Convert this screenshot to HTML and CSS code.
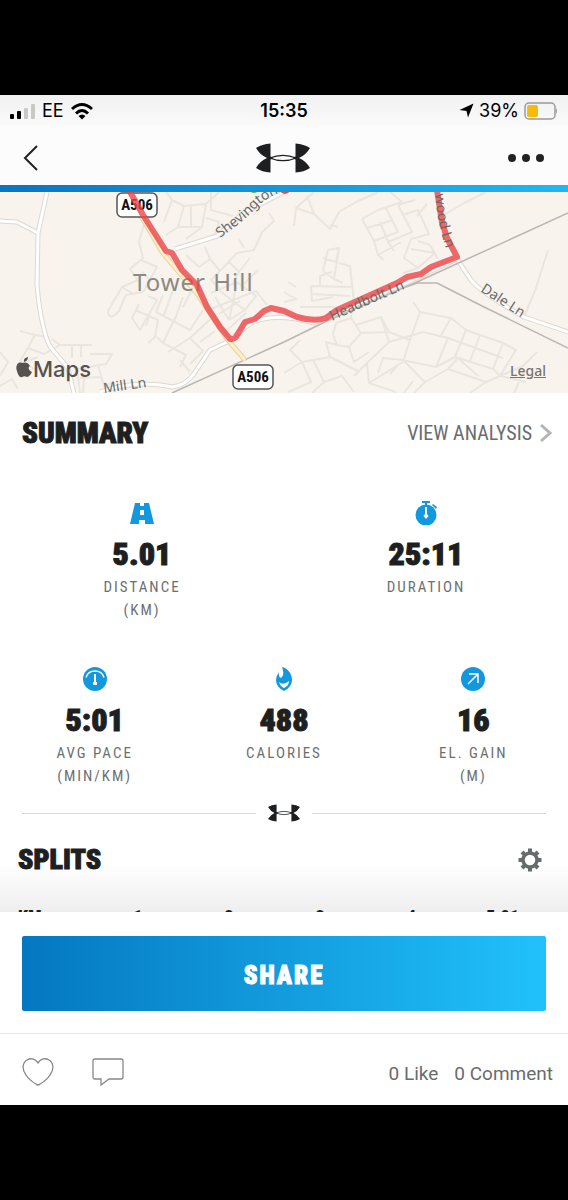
FILE: index.html
```
<!DOCTYPE html>
<html lang="en">
	<head>
		<meta charset="utf-8">
		<meta name="viewport" content="width=device-width, initial-scale=1">
		<title>Workout</title>
		<link rel="stylesheet" href="styles.css">
	</head>
	<body>
		<svg class="defs" width="0" height="0">
			<symbol id="logo" viewBox="0 0 54 30">
				<path d="M0 5Q6 1 14.500 .5V13.500L17 14.500V15.500L14.500 16.500V29.500Q6 29 0 25Q4 18 11 15Q4 12 0 5Z"/>
				<path d="M54 5Q48 1 39.500 .5V13.500L37 14.500V15.500L39.500 16.500V29.500Q48 29 54 25Q50 18 43 15Q50 12 54 5Z"/>
				<path d="M14 15Q20 12.300 27 12.300T40 15Q34 17.700 27 17.700T14 15Z" fill="none" stroke="currentColor" stroke-width="1.300"/>
			</symbol>
		</svg>
		<main class="app">
			<div class="status">
				<div class="carrier">
					<svg width="26" height="18" viewBox="0 0 26 18">
						<rect x="0" y="12" width="4" height="5" rx="1"/>
						<rect x="7" y="9" width="4" height="8" rx="1"/>
						<rect x="14" y="6" width="4" height="11" rx="1" fill="#c8c8c8"/>
						<rect x="21" y="2" width="4" height="15" rx="1" fill="#c8c8c8"/>
					</svg>
					<span>EE</span>
					<svg width="24" height="18" viewBox="0 0 24 18" fill="none" stroke="#000" stroke-width="3">
						<path d="M2 7Q12-2 22 7M6 11.500Q12 5.500 18 11.500"/>
						<path d="M8.500 14Q12 11 15.500 14L12 17.500Z" fill="#000" stroke="none"/>
					</svg>
				</div>
				<div class="time">15:35</div>
				<div class="battery">
					<svg width="15" height="15" viewBox="0 0 15 15"><path d="M14.500.5L9 14.500L7.500 8L.5 7Z"/></svg>
					<span>39%</span>
					<svg width="34" height="18" viewBox="0 0 34 18">
						<rect x="1" y="1" width="30" height="16" rx="4" fill="none" stroke="#999" stroke-width="1.500"/>
						<rect x="3" y="3" width="11" height="12" rx="2" fill="#f5bc0b"/>
						<path d="M32 6Q34 9 32 12Z" fill="#999"/>
					</svg>
				</div>
			</div>
			<header class="nav">
				<button class="icon" aria-label="Back">
					<svg width="18" height="28" viewBox="0 0 18 28" fill="none" stroke="#222" stroke-width="2"><path d="M15 2L3 14L15 26"/></svg>
				</button>
				<svg class="logo" width="54" height="30"><use href="#logo"/></svg>
				<button class="icon more" aria-label="More">
					<svg width="36" height="8" viewBox="0 0 36 8" fill="#222"><circle cx="4" cy="4" r="4"/><circle cx="18" cy="4" r="4"/><circle cx="32" cy="4" r="4"/></svg>
				</button>
			</header>
			<section class="map">
				<svg viewBox="0 0 568 201" preserveAspectRatio="xMidYMid slice">
					<defs>
						<path id="shev" d="M220 46Q243 30 256 16T300-6"/>
						<path id="wood" d="M434-24Q435 12 439 31Q442 45 449 66"/>
					</defs>
					<!-- side streets -->
					<g class="streets">
						<path d="M146 25L139 50L143 66L130 77L138 88L122 95L108 119Q109 130 119 119L126 103L143 100L157 75L141 68M122 95L132 101M143 100L151 89L142 80"/>
						<path d="M139 112L132 126L140 138L157 108L148 104M135 118L149 124L146 134M149 124L158 128L155 145L148 151M163 103L156 120L190 138L203 118M173 98L164 123M183 105L174 130M193 96L183 115"/>
						<path d="M157 145L163 151L175 126M163 151L186 163L180 175M168 160L190 146L203 159L190 172M190 146L216 122M200 150L215 139M180 168L190 180"/>
						<path d="M164 30L172 8L184 14L178 35L166 43M184 14L206 12L202 35L186 47M172 8L166 0M206 12L219 0M206 26L219 30L215 42M191 13L191 34M178 35L202 35M211 0L211 18L233 24"/>
						<path d="M186 63L199 75L210 67L220 79L237 61L254 58L262 40L274 29L269 21M210 67L205 55M220 79L211 88L220 97M229 70L239 80L250 66M239 80L233 92M244 56L239 47"/>
						<path d="M211 101L237 90L256 104L245 118L229 128L215 105M237 90L229 128M220 99L246 119M211 117L256 99L267 113M244 92L258 78M219 122L240 109M226 139L246 121"/>
						<path d="M20 139L35 143L28 156L44 162L60 153L92 153M35 143L49 145M60 153L52 147M72 153L72 166M81 153L81 165M0 160L8 170L0 184M28 156L20 169L36 178M28 169L38 165M80 201L77 177L106 172L112 162L90 162M85 175L83 201M98 173L104 194L112 191M80 186L102 185M0 194L12 187L18 197"/>
						<path d="M294 34L296 16L314 0M296 16L314 22L330 37L339 20L356 10L378 0M314 22L307 4M330 33L338 35M362 27L378 18L402 10L390 0M362 27L374 49L398 40L386 16M367 36L393 28M380 30L388 50L412 40L398 13M374 49L378 63L401 50M388 50L394 59M378 63L384 68M398 13L415 8M402 23L418 18L429 42L411 47L404 66L418 76L435 61L411 57M418 76L403 81M418 49L430 53M427 12L417 24M430 53L438 67"/>
						<path d="M323 79L328 58L339 56L336 70L323 66M339 56L334 87L323 79M334 87L343 91M339 71L350 74L354 111M311 94L352 95M311 94L312 109L333 105M320 94L320 84L332 80M300 115L334 115M313 102L350 104M284 100L296 107L284 110M288 90L296 95"/>
						<path d="M333 143L336 131L351 126L361 141L349 155L337 153L333 143M351 126L353 110M356 133L381 125L389 140L410 148L403 170L369 191L367 171L389 150L423 140L448 146L436 175L402 168M361 141L389 140M369 191L396 200M367 171L354 184M389 150L381 125M410 148L420 120L413 110M420 120L451 126L440 145M451 126L466 138L503 151L493 177L455 165L436 175M466 138L455 165M480 143L470 169M503 151L516 158L500 184L493 177M448 146L503 166"/>
						<path d="M284 181L302 170L330 165L358 179M302 170L290 158L300 148M330 165L326 150L337 153M313 168L324 190L342 184L354 200M324 190L312 201M302 170L311 190L288 200M349 155L354 170L369 160M378 181L383 166L402 168M390 182L398 173M404 169L425 190L448 177L486 190L470 201M425 190L414 201M448 177L458 166L478 184M486 190L500 184L523 174L537 160M500 184L526 190M514 201L523 181M413 189L404 201"/>
						<path d="M524 125L536 96L548 58M440 25L466 10L486 0"/>
					</g>
					<g class="road-edge">
						<path d="M47 0L38 41L37 93Q39 117 43 133Q46 148 51 156L68 176L74 201M0 29L17 30L38 41M175 57L217 44L245 20L284 0M100 200Q135 187 173 195Q185 193 193 183L210 158L227 150L248 133Q270 119 314 131L408 90L457 67L471 88Q480 100 524 125L568 140"/>
					</g>
					<g class="road">
						<path d="M47 0L38 41L37 93Q39 117 43 133Q46 148 51 156L68 176L74 201M0 29L17 30L38 41M175 57L217 44L245 20L284 0M100 200Q135 187 173 195Q185 193 193 183L210 158L227 150L248 133Q270 119 314 131L408 90L457 67L471 88Q480 100 524 125L568 140"/>
					</g>
					<path class="rail" d="M172 201L284 150L329 128L417 90L568 21M406 95L417 91L437 91L484 115L568 156"/>
					<path class="main-edge" d="M127 0L162 60L198 103L227 147L245 168"/>
					<path class="main-road" d="M127 0L162 60L198 103L227 147L245 168"/>
					<text class="town" x="133" y="99">Tower Hill</text>
					<g class="sign"><rect x="117" y="1" width="40" height="24" rx="5"/><text x="137" y="18">A506</text></g>
					<path class="route" d="M129-2L143 23L157 45L166 59L172 61L182 78L197 93L207 115L220 135L230 147Q233 148 236 145L245 130L255 127L264 119L271 116L284 119L297 125Q314 130 326 126L337 118L397 91L407 85L421 82L431 75L457 65L447 46L442 30L437-2"/>
					<circle cx="254" cy="-4" r="5" fill="#62b54a"/><circle cx="285" cy="-3" r="5" fill="#d9534f"/>
					<g class="sign"><rect x="233" y="173" width="40" height="24" rx="5"/><text x="253" y="190">A506</text></g>
					<g class="names">
						<text><textPath href="#shev">Shevington</textPath></text>
						<text><textPath href="#wood" startOffset="26">wood Ln</textPath></text>
						<text transform="translate(332 129) rotate(-24)">Headbolt Ln</text>
						<text transform="translate(480 99) rotate(33)">Dale Ln</text>
						<text transform="translate(104 201) rotate(-8)">Mill Ln</text>
					</g>
					<g class="maps">
						<path d="M30 174C27 169 24 171 22 171C18 169 15 174 17 179C18 183 20 186 22 185C24 184 25 184 27 185C29 185 31 182 32 180C28 178 28 175 30 174ZM24 170Q23 166 28 165Q28 169 24 170Z"/>
						<text x="33" y="185">Maps</text>
					</g>
				</svg>
				<a class="legal" href="#">Legal</a>
			</section>
			<section class="summary">
				<div class="head">
					<h2>SUMMARY</h2>
					<a class="analysis" href="#">VIEW ANALYSIS
						<svg width="14" height="20" viewBox="0 0 14 20" fill="none" stroke="#b2b4b5" stroke-width="3"><path d="M2 2L11 10L2 18"/></svg>
					</a>
				</div>
				<div class="stats two">
					<div class="stat">
						<svg width="24" height="24" viewBox="0 0 24 24"><path fill-rule="evenodd" d="M5 2H10V5H14V2H19L24 23H15V19H9V23H0ZM10 9V14H14V9Z"/></svg>
						<strong>5.01</strong>
						<span>DISTANCE<br>(KM)</span>
					</div>
					<div class="stat">
						<svg width="24" height="24" viewBox="0 0 24 24"><circle cx="12" cy="14" r="10.500"/><path d="M8 0H16V2H13V5H11V2H8ZM19 3L23 6L22 8L18 4Z"/><path d="M11 6H13V13L14.500 15L12 18L9.500 15L11 13Z" fill="#fff"/></svg>
						<strong>25:11</strong>
						<span>DURATION</span>
					</div>
				</div>
				<div class="stats three">
					<div class="stat">
						<svg width="24" height="24" viewBox="0 0 24 24"><circle cx="12" cy="12" r="12"/><path d="M3 10.500Q5 4 12 4T21 10.500" fill="none" stroke="#fff" stroke-width="1.500"/><path d="M11 7H13V15H14V18H10V15H11Z" fill="#fff"/></svg>
						<strong>5:01</strong>
						<span>AVG PACE<br>(MIN/KM)</span>
					</div>
					<div class="stat">
						<svg width="24" height="24" viewBox="0 0 24 24"><path d="M10 0C15 1 20 6 20 13Q20 20 12 24Q4 20 4 13Q4 9 7 5Q6 10 9 11Q13 8 10 0Z"/><path d="M7 15Q11 19 17 14Q17 19 12 21Q8 19 7 15Z" fill="#fff"/></svg>
						<strong>488</strong>
						<span>CALORIES</span>
					</div>
					<div class="stat">
						<svg width="24" height="24" viewBox="0 0 24 24"><circle cx="12" cy="12" r="12"/><path d="M7 17L17 7M8 7H17V16" fill="none" stroke="#fff" stroke-width="1.500"/></svg>
						<strong>16</strong>
						<span>EL. GAIN<br>(M)</span>
					</div>
				</div>
			</section>
			<div class="divider"><svg width="32" height="18"><use href="#logo"/></svg></div>
			<section class="splits">
				<div class="head">
					<h2>SPLITS</h2>
					<button class="icon" aria-label="Splits settings">
						<svg width="24" height="24" viewBox="0 0 24 24" fill="none" stroke="#666b6e"><circle cx="12" cy="12" r="7" stroke-width="3.500"/><path d="M12 0.500V4.500M12 19.500V23.500M.5 12H4.500M19.500 12H23.500M4 4L6.500 6.500M17.500 17.500L20 20M4 20L6.500 17.500M17.500 6.500L20 4" stroke-width="4"/></svg>
					</button>
				</div>
				<div class="clip">
					<table>
						<tr><th>KM</th><th>1</th><th>2</th><th>3</th><th>4</th><th>5.01</th></tr>
					</table>
				</div>
			</section>
			<div class="share">
				<button>SHARE</button>
			</div>
			<footer>
				<button class="icon" aria-label="Like">
					<svg width="32" height="28" viewBox="0 0 32 28" fill="none" stroke="#888" stroke-width="1.300"><path d="M16 5C19 0 24 0 27 2C32 5 32 12 28 17Q25 22 18 26Q16 28 14 26Q7 22 4 17C0 12 0 5 5 2C8 0 13 0 16 5Z"/></svg>
				</button>
				<button class="icon" aria-label="Comment">
					<svg width="32" height="28" viewBox="0 0 32 28" fill="none" stroke="#888" stroke-width="1.300"><path d="M3 1H29Q31 1 31 3V19Q31 21 29 21H17L9 27V21H3Q1 21 1 19V3Q1 1 3 1Z"/></svg>
				</button>
				<div class="counts"><a href="#">0 Like</a><a href="#">0 Comment</a></div>
			</footer>
		</main>
	</body>
</html>
```

FILE: styles.css
```
*{
	box-sizing: border-box;
}
body{
	margin: 0;
	padding: 95px 0;
	background-color: #000;
	color: #1d1f21;
	font-family: "Roboto Condensed", "Liberation Sans Narrow", "Liberation Sans", sans-serif;
}
.app{
	background-color: #fff;
}
svg{
	display: block;
}
.defs{
	position: absolute;
}
a{
	color: #696c6e;
	text-decoration: none;
}
button{
	border: 0;
	padding: 0;
	background: none;
	font-family: inherit;
	cursor: pointer;
}
.status{
	display: grid;
	grid-template-columns: 1fr auto 1fr;
	align-items: center;
	height: 31px;
	padding: 0 10px;
	background: linear-gradient(#f1f1f1, #fafafa);
	color: #000;
	font: 18px/31px Inter, sans-serif;
}
.carrier, .battery{
	display: flex;
	align-items: center;
	gap: 6px;
}
.battery{
	justify-content: flex-end;
	gap: 5px;
}
.time{
	font-weight: 600;
}
.nav{
	display: grid;
	grid-template-columns: 1fr auto 1fr;
	align-items: center;
	height: 66px;
	padding: 4px 24px 0 22px;
	border-bottom: 7px solid;
	border-image: linear-gradient(90deg, #0b74bf, #22b7f0) 1;
	background-color: #fcfcfc;
}
.logo, .divider svg{
	fill: currentColor;
}
.more{
	justify-self: end;
}
.nav .icon{
	width: max-content;
}
.map{
	position: relative;
	background-color: #f8f4ed;
}
.map > svg{
	width: 100%;
	height: auto;
}
.map path{
	stroke-linejoin: round;
}
.streets, .road, .road-edge, .rail, .main-road, .main-edge, .route{
	fill: none;
}
.streets{
	stroke: #e9e6df;
	stroke-width: 2;
}
.road-edge{
	stroke: #dcd9d2;
	stroke-width: 5;
}
.road{
	stroke: #fff;
	stroke-width: 3;
}
.rail{
	stroke: #b9b7b2;
	stroke-width: 1.5;
}
.main-edge{
	stroke: #e6d5a0;
	stroke-width: 5;
}
.main-road{
	stroke: #fbf0cb;
	stroke-width: 3;
}
.route{
	stroke: #ee4447;
	stroke-opacity: .8;
	stroke-width: 6;
}
.town{
	fill: #8b8984;
	font: 24px "Noto Sans", sans-serif;
	letter-spacing: 1px;
}
.sign rect{
	fill: #fff;
	stroke: #555;
	stroke-width: 1.5px;
}
.sign text{
	fill: #111;
	font: bold 15px "Roboto Condensed", "Liberation Sans Narrow", sans-serif;
	text-anchor: middle;
}
.names{
	fill: #6b6966;
	font: 14px "Noto Sans", sans-serif;
}
.maps{
	fill: #55524f;
	font: 500 22px Inter, sans-serif;
}
.legal{
	position: absolute;
	right: 22px;
	bottom: 12px;
	color: #77746f;
	font: 500 14px/20px "Noto Sans", sans-serif;
	text-decoration: underline;
}
.summary{
	padding-top: 24px;
}
.head{
	display: flex;
	align-items: center;
	justify-content: space-between;
	padding: 0 15px 0 22px;
}
h2{
	margin: 0;
	font-size: 29px;
	font-weight: 900;
	line-height: 32px;
	-webkit-text-stroke: 1px;
}
.analysis{
	display: flex;
	align-items: center;
	gap: 7px;
	font-size: 20px;
}
.stats{
	display: grid;
}
.two{
	grid-template-columns: 1fr 1fr;
	padding-top: 52px;
}
.three{
	grid-template-columns: 1fr 1fr 1fr;
	padding-top: 45px;
}
.stat{
	display: flex;
	flex-direction: column;
	align-items: center;
	text-align: center;
}
.stat svg{
	fill: #1298df;
}
.stat strong{
	margin: 11px 0 4px;
	font-size: 32px;
	font-weight: 900;
	line-height: 36px;
	-webkit-text-stroke: 1px;
}
.stat span{
	color: #6c6f71;
	font-size: 15px;
	line-height: 23px;
	letter-spacing: 2px;
}
.divider{
	display: flex;
	align-items: center;
	gap: 12px;
	padding: 16px 22px 22px;
}
.divider:before, .divider:after{
	content: "";
	flex: 1;
	height: 1px;
	background-color: #d9d9d9;
}
.splits{
	background: linear-gradient(#fff 30%, #eee);
}
.splits .head{
	padding: 0 26px 0 18px;
}
.splits h2{
	font-size: 28px;
}
.clip{
	height: 36px;
	padding: 31px 20px 0 18px;
	overflow: hidden;
}
table{
	width: 100%;
	border-collapse: collapse;
	table-layout: fixed;
}
th{
	padding: 0;
	font-size: 18px;
	font-weight: 900;
	line-height: 20px;
}
th:first-child{
	width: 14%;
	text-align: left;
}
.share{
	padding: 24px 22px 22px;
	border-bottom: 1px solid #e8e8e8;
}
.share button{
	width: 100%;
	height: 75px;
	padding-top: 4px;
	border-radius: 2px;
	background: linear-gradient(90deg, #0477c0, #21c1fc);
	color: #fff;
	font-size: 25px;
	font-weight: 900;
	letter-spacing: 2px;
	-webkit-text-stroke: 1px;
}
footer{
	display: flex;
	align-items: center;
	gap: 38px;
	height: 71px;
	padding: 4px 15px 0 22px;
}
.counts{
	display: flex;
	gap: 16px;
	margin-left: auto;
	padding-top: 4px;
	font: 19px/24px Roboto, sans-serif;
}
```
